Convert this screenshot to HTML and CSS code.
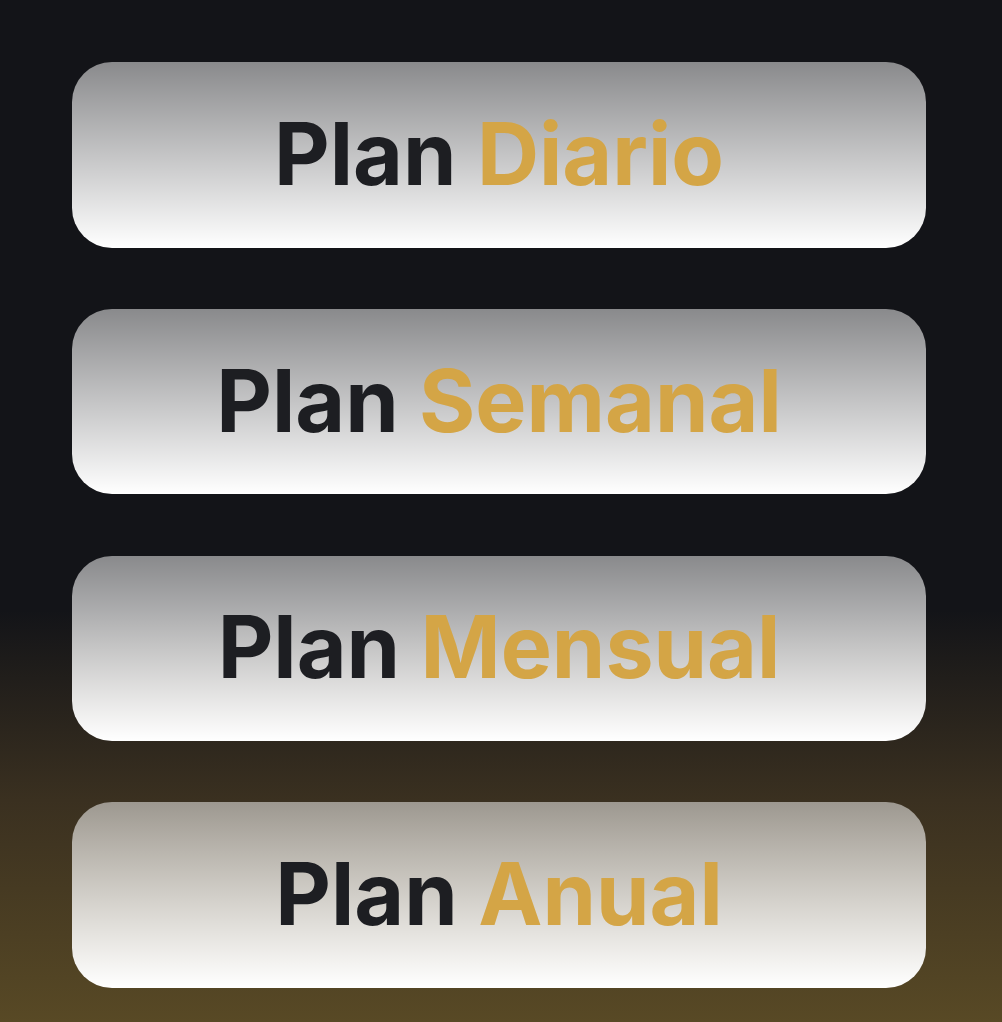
FILE: index.html
```html
<!DOCTYPE html>
<html lang="es">
<head>
<meta charset="utf-8">
<title>Planes</title>
<link rel="stylesheet" href="styles.css">
</head>
<body>
  <main class="plans">
    <button class="plan">Plan <span class="accent">Diario</span></button>
    <button class="plan">Plan <span class="accent">Semanal</span></button>
    <button class="plan">Plan <span class="accent">Mensual</span></button>
    <button class="plan">Plan <span class="accent">Anual</span></button>
  </main>
</body>
</html>
```
FILE: styles.css
```css
html, body {
  margin: 0;
  padding: 0;
}
body {
  width: 1002px;
  height: 1022px;
  overflow: hidden;
  background: linear-gradient(to bottom, #131418 0px, #131418 610px, #3a3020 800px, #584925 1022px);
  font-family: Inter, "Noto Sans", sans-serif;
}
.plans {
  display: flex;
  flex-direction: column;
  gap: 61.33px;
  padding: 62px 0 0 72px;
  width: 854px;
}
.plan {
  display: flex;
  align-items: center;
  justify-content: center;
  height: 185.5px;
  border: 0;
  border-radius: 40px;
  background: linear-gradient(to bottom, rgba(255,255,255,0.5), rgba(255,255,255,1));
  font-family: inherit;
  font-size: 86px;
  font-weight: 700;
  color: #1d1e22;
  white-space: pre;
  letter-spacing: 0;
  padding: 0 0 2px 0;
  cursor: pointer;
}
.accent {
  color: #d4a546;
}
```
